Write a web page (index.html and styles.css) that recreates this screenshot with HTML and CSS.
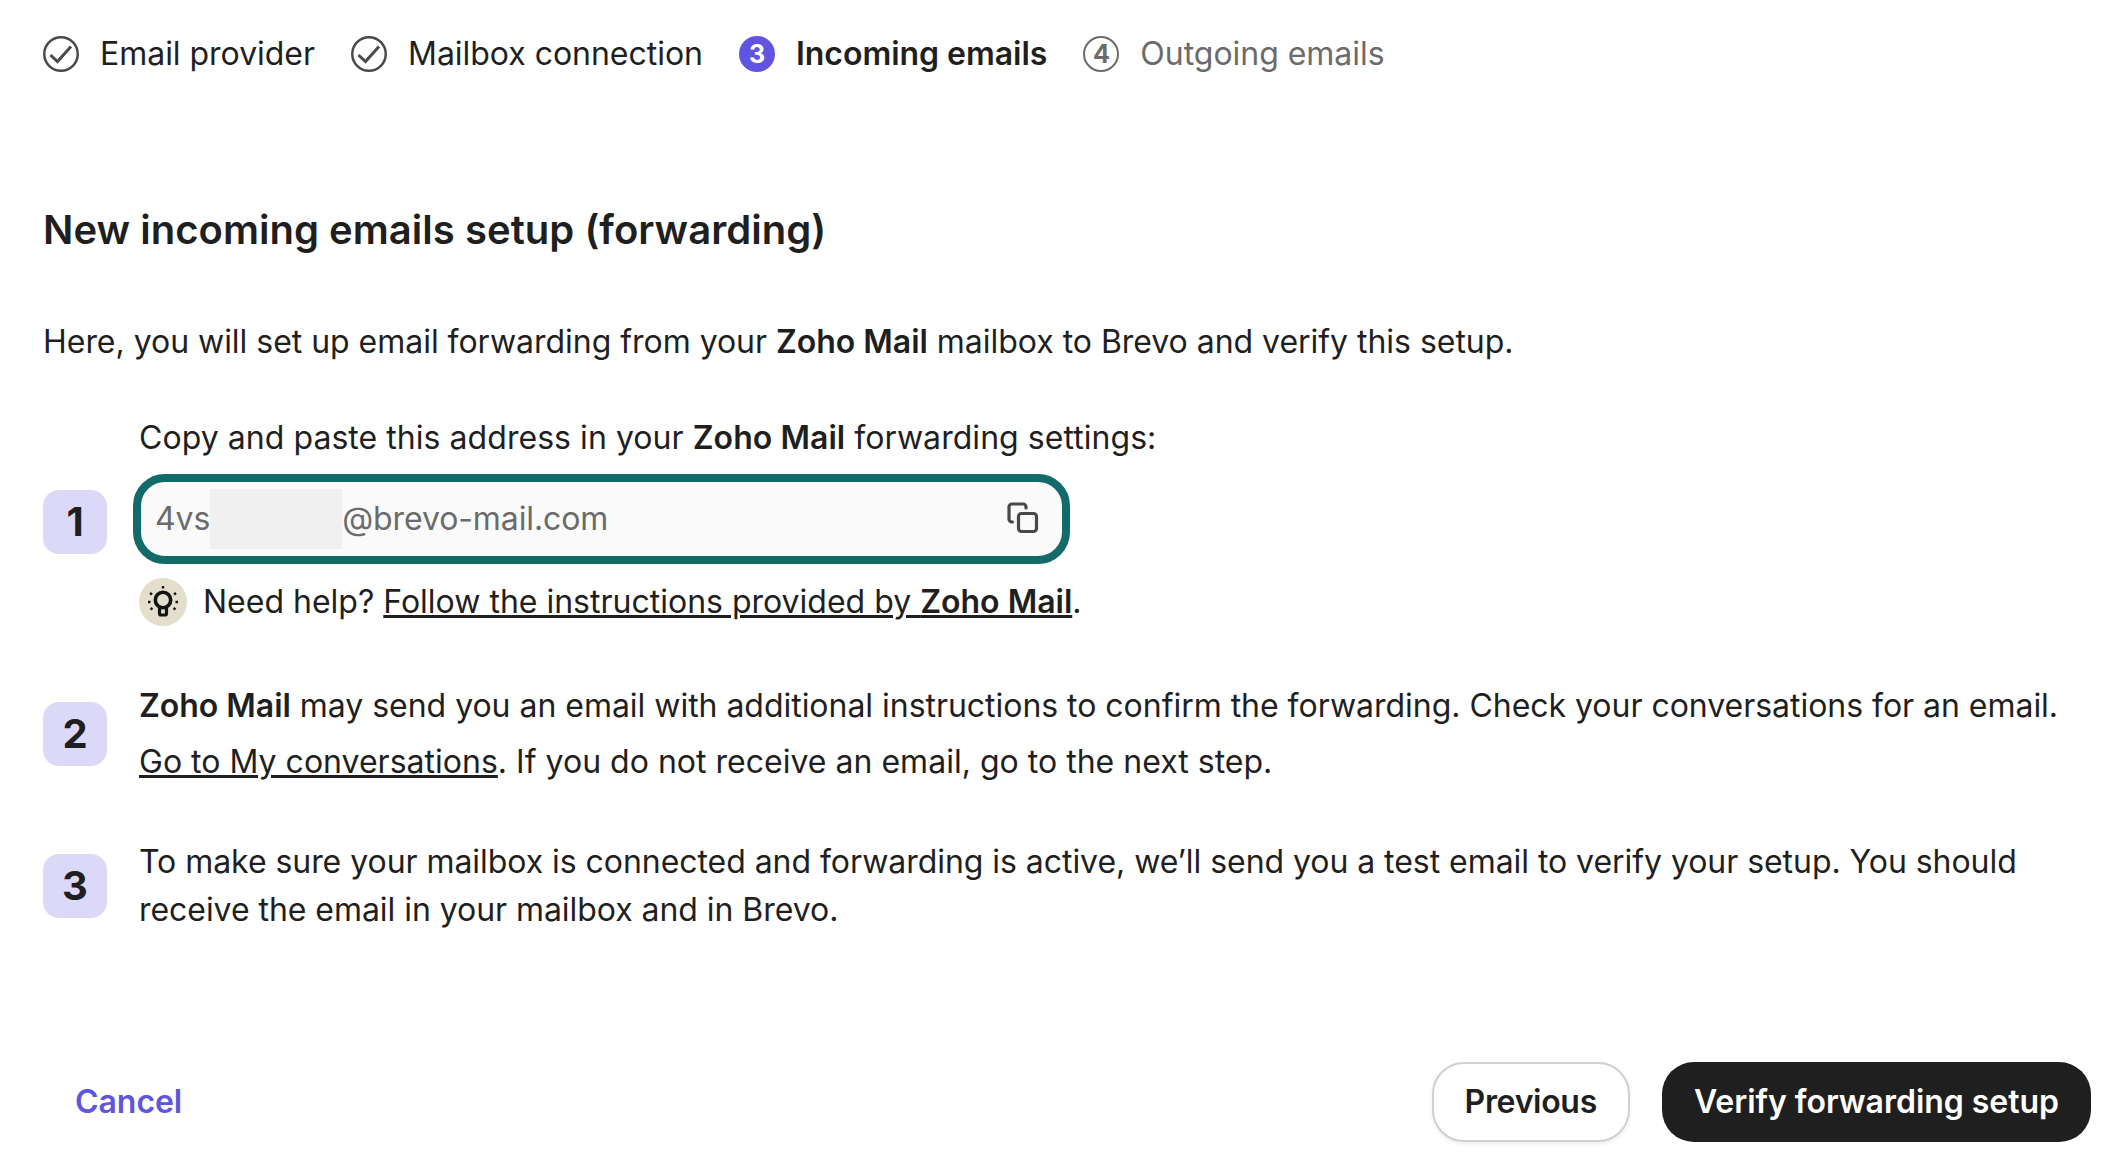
FILE: index.html
```html
<!DOCTYPE html>
<html lang="en">
<head>
<meta charset="utf-8">
<title>Incoming emails</title>
<link rel="stylesheet" href="styles.css">
</head>
<body>
<main class="page">
  <nav class="stepper">
    <div class="step">
      <svg class="step-icon" viewBox="0 0 36 36"><circle cx="18" cy="18" r="16.750" fill="none" stroke="#4a4a4a" stroke-width="2.500"/><path d="M7.500 19l7 6.500L28 10.500" fill="none" stroke="#4a4a4a" stroke-width="3"/></svg>
      <span>Email provider</span>
    </div>
    <div class="step">
      <svg class="step-icon" viewBox="0 0 36 36"><circle cx="18" cy="18" r="16.750" fill="none" stroke="#4a4a4a" stroke-width="2.500"/><path d="M7.500 19l7 6.500L28 10.500" fill="none" stroke="#4a4a4a" stroke-width="3"/></svg>
      <span>Mailbox connection</span>
    </div>
    <div class="step step-active">
      <span class="step-num step-num-active">3</span>
      <span>Incoming emails</span>
    </div>
    <div class="step step-todo">
      <span class="step-num step-num-todo">4</span>
      <span>Outgoing emails</span>
    </div>
  </nav>

  <h1 class="title">New incoming emails setup (forwarding)</h1>
  <p class="intro">Here, you will set up email forwarding from your <b>Zoho Mail</b> mailbox to Brevo and verify this setup.</p>

  <section class="item item-one">
    <div class="badge">1</div>
    <div class="item-body">
      <p class="copy-label">Copy and paste this address in your <b>Zoho Mail</b> forwarding settings:</p>
      <div class="address">
        <span class="address-text">4vs<span class="redacted"></span>@brevo-mail.com</span>
        <svg class="copy-icon" viewBox="0 0 36 36"><rect x="13.500" y="13.500" width="18" height="18" rx="3" fill="none" stroke="#484848" stroke-width="3.200"/><path d="M7.500 22H7a3 3 0 0 1-3-3V7a3 3 0 0 1 3-3h11a3 3 0 0 1 3 3v1" fill="none" stroke="#484848" stroke-width="3.200" stroke-linecap="round"/></svg>
      </div>
      <div class="help">
        <span class="bulb">
          <svg viewBox="0 0 48 48"><circle cx="24" cy="22" r="7.700" fill="none" stroke="#141414" stroke-width="3.600"/><path d="M20.500 29.500h7v6a1.500 1.500 0 0 1-1.500 1.500h-4a1.500 1.500 0 0 1-1.500-1.500z" fill="none" stroke="#141414" stroke-width="3.200"/><path d="M24 8v2.500M11 15l2 1.500M37 15l-2 1.500M9 24h2.500M39 24h-2.500M11.500 31.500l2-1.500M36.500 31.500l-2-1.500" fill="none" stroke="#141414" stroke-width="2.400"/></svg>
        </span>
        <span>Need help? <a href="#">Follow the instructions provided by <b>Zoho Mail</b></a>.</span>
      </div>
    </div>
  </section>

  <section class="item item-two">
    <div class="badge">2</div>
    <p class="item-text"><b>Zoho Mail</b> may send you an email with additional instructions to confirm the forwarding. Check your conversations for an email.<br><span class="line-two"><a href="#">Go to My conversations</a>. If you do not receive an email, go to the next step.</span></p>
  </section>

  <section class="item item-three">
    <div class="badge">3</div>
    <p class="item-text">To make sure your mailbox is connected and forwarding is active, we’ll send you a test email to verify your setup. You should receive the email in your mailbox and in Brevo.</p>
  </section>

  <footer class="actions">
    <a class="cancel" href="#">Cancel</a>
    <div class="buttons">
      <button class="btn btn-secondary" type="button">Previous</button>
      <button class="btn btn-primary" type="button">Verify forwarding setup</button>
    </div>
  </footer>
</main>
</body>
</html>
```
FILE: styles.css
```css
* { box-sizing: border-box; }
html, body { margin: 0; padding: 0; background: #fff; }
body {
  font-family: Inter, "Liberation Sans", sans-serif;
  font-size: 32px;
  line-height: 48px;
  color: #1f1f1f;
}
a { color: inherit; }
p, h1 { margin: 0; }
b { font-weight: 600; }

.page { width: 2122px; height: 1176px; padding: 30px 31px 0 43px; overflow: hidden; }

.stepper { display: flex; gap: 36px; height: 48px; letter-spacing: -0.03px; }
.step { display: flex; align-items: center; gap: 21px; white-space: nowrap; }
.step-icon { width: 36px; height: 36px; flex: none; }
.step-active { font-weight: 600; }
.step-todo { color: #6b6b6b; }
.step-num {
  width: 36px; height: 36px; flex: none; border-radius: 50%;
  display: flex; align-items: center; justify-content: center;
  font-size: 25px; line-height: 1; font-weight: 700;
}
.step-num-active { background: #5f55e0; color: #fff; }
.step-num-todo { border: 2.500px solid #6b6b6b; color: #6b6b6b; }

.title { margin-top: 122px; font-size: 40px; line-height: 60px; font-weight: 600; letter-spacing: 0.03px; }
.intro { margin-top: 58px; letter-spacing: -0.03px; }

.item { display: flex; gap: 32px; }
.badge {
  width: 64px; height: 64px; flex: none; border-radius: 16px;
  background: #dcd9f8; display: flex; align-items: center; justify-content: center;
  font-size: 40px; line-height: 1; font-weight: 700;
}
.item-one { margin-top: 48px; }
.item-one .badge { margin-top: 76px; }
.item-body { flex: 1; margin-left: -6px; }
.copy-label { margin-left: 6px; letter-spacing: 0.05px; }
.address {
  margin-top: 12px; width: 937px; height: 90px;
  border: 8px solid #136b69; border-radius: 32px; background: #fafafa;
  display: flex; align-items: center; justify-content: space-between;
  padding: 0 16px 0 14px; color: #6b6b6b; letter-spacing: -0.1px;
}
.address-text { display: flex; align-items: center; }
.redacted { width: 132px; height: 60px; margin: 0; background: #f0f0f0; }
.copy-icon { width: 36px; height: 36px; flex: none; margin: -2px 5px 0 0; }
.help { display: flex; align-items: center; gap: 16px; margin: 14px 0 0 6px; }
.bulb { width: 48px; height: 48px; flex: none; border-radius: 50%; background: #e3dfcc; }
.bulb svg { display: block; width: 48px; height: 48px; }

.item-two { margin-top: 52px; align-items: center; letter-spacing: -0.03px; }
.item-two .item-text { line-height: 56px; }
.line-two { letter-spacing: 0.015px; }
.item-three { margin-top: 48px; align-items: center; letter-spacing: -0.05px; }
.item-text { flex: 1; }

.actions { margin-top: 128px; display: flex; align-items: center; justify-content: space-between; }
.cancel { margin-left: 32px; font-weight: 600; color: #5f55e0; text-decoration: none; letter-spacing: -0.05px; }
.buttons { display: flex; gap: 32px; }
.btn {
  height: 80px; border-radius: 32px; padding: 0 32px;
  font: 600 32px/48px Inter, "Liberation Sans", sans-serif; cursor: pointer;
}
.btn-secondary { padding: 0 31px; background: #fff; color: #1f1f1f; border: 2px solid #d0d0d0; box-shadow: 0 2px 4px rgba(0,0,0,.08); letter-spacing: -0.3px; }
.btn-primary { background: #1f1f1f; color: #fff; border: 0; letter-spacing: -0.03px; }
```
